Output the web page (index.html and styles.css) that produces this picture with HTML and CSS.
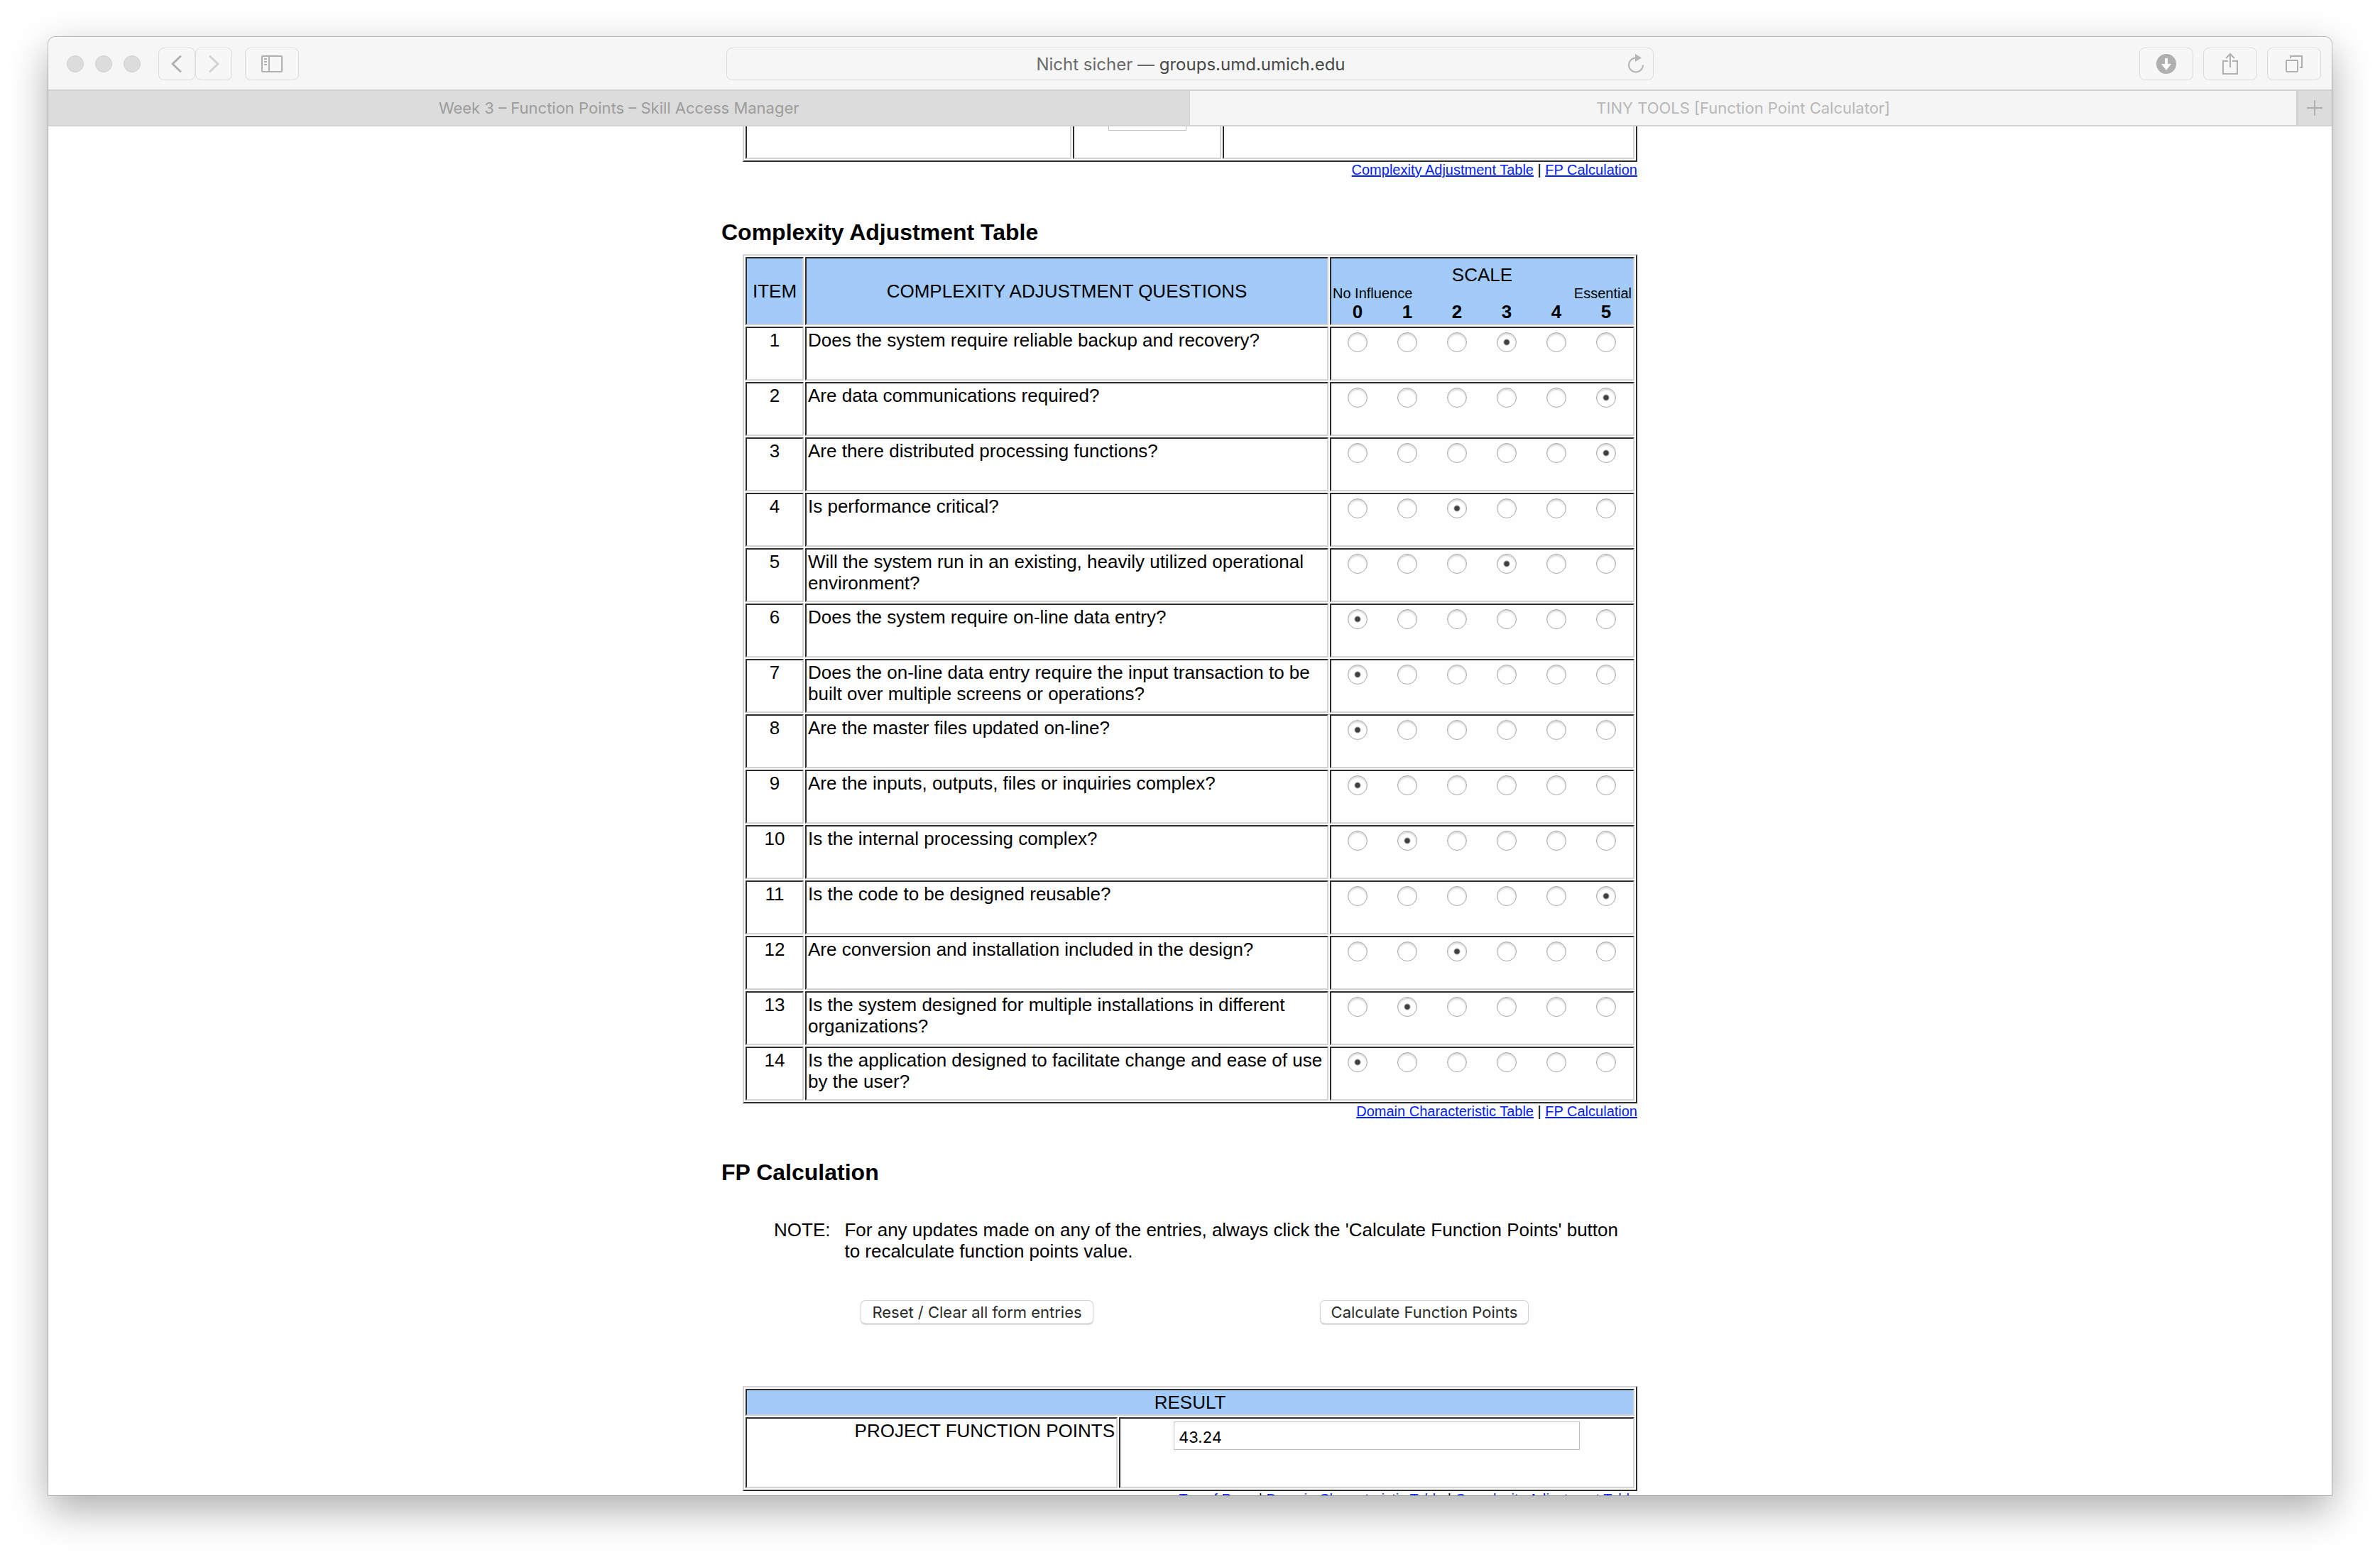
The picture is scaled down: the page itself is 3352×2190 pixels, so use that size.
FILE: index.html
```html
<!DOCTYPE html>
<html lang="en">
<head>
<meta charset="utf-8">
<title>TINY TOOLS [Function Point Calculator]</title>
<link rel="stylesheet" href="styles.css">
</head>
<body>
<div class="window">
  <header class="toolbar">
    <div class="tools tools-left">
      <div class="lights"><span class="light"></span><span class="light"></span><span class="light"></span></div>
      <div class="history">
        <button class="tool tool-nav" type="button" aria-label="Back"><svg width="20" height="28" viewBox="0 0 20 28"><path d="M15 3.500 4 14l11 10.500" fill="none" stroke="#b0b0b0" stroke-width="3" stroke-linecap="round" stroke-linejoin="round"/></svg></button>
        <button class="tool tool-nav" type="button" aria-label="Forward"><svg width="20" height="28" viewBox="0 0 20 28"><path d="M5 3.500 16 14 5 24.500" fill="none" stroke="#d2d2d2" stroke-width="3" stroke-linecap="round" stroke-linejoin="round"/></svg></button>
      </div>
      <button class="tool" type="button" aria-label="Sidebar"><svg width="30" height="24" viewBox="0 0 30 24" fill="none" stroke="#b0b0b0" stroke-width="2"><rect x="1" y="1" width="28" height="22" rx="1"/><path d="M11 1v22M4 5h4M4 9h4M4 13h4"/></svg></button>
    </div>
    <div class="address">
      <p class="address-text">Nicht sicher — <span class="domain">groups.umd.umich.edu</span></p>
      <button class="reload" type="button" aria-label="Reload"><svg width="24" height="28" viewBox="0 0 24 28"><path d="M12 5.500a10 10 0 1 0 10 10" fill="none" stroke="#b5b5b5" stroke-width="2"/><path d="M11 0v11l9-5.500z" fill="#b5b5b5"/></svg></button>
    </div>
    <div class="tools tools-right">
      <button class="tool" type="button" aria-label="Downloads"><svg width="28" height="28" viewBox="0 0 28 28"><circle cx="14" cy="14" r="14" fill="#b0b0b0"/><path d="M12 6h4v8h5l-7 9-7-9h5z" fill="#fff"/></svg></button>
      <button class="tool" type="button" aria-label="Share"><svg width="24" height="32" viewBox="0 0 24 32" fill="none" stroke="#b0b0b0" stroke-width="2"><path d="M9 12H2v18h20V12h-7M12 21V3M6 8l6-6 6 6"/></svg></button>
      <button class="tool" type="button" aria-label="Tab overview"><svg width="24" height="24" viewBox="0 0 24 24" fill="none" stroke="#b0b0b0" stroke-width="2"><rect x="1" y="7" width="16" height="16" rx="1"/><path d="M7 4V1h16v16h-3"/></svg></button>
    </div>
  </header>
  <nav class="tabs">
    <a class="tab" href="#week3">Week 3 – Function Points – Skill Access Manager</a>
    <a class="tab tab-active" href="#calculator">TINY TOOLS [Function Point Calculator]</a>
    <button class="new-tab" type="button" aria-label="New tab"><svg width="22" height="22" viewBox="0 0 22 22"><path d="M11 0v22M0 11h22" stroke="#b0b0b0" stroke-width="2"/></svg></button>
  </nav>
  <main class="view">
    <form class="page" id="calculator">
      <section class="block block-domain" id="domain">
        <table class="grid">
          <colgroup><col class="col-measure"><col class="col-count"><col></colgroup>
          <tbody><tr class="row-count"><td></td><td class="center"><input class="field field-count" type="text" aria-label="Count"></td><td></td></tr></tbody>
        </table>
        <p class="jump"><a href="#complexity">Complexity Adjustment Table</a> | <a href="#fp">FP Calculation</a></p>
      </section>

      <section class="block" id="complexity">
        <h2 class="title">Complexity Adjustment Table</h2>
        <table class="grid">
          <colgroup><col class="col-item"><col><col class="col-scale"></colgroup>
          <thead>
            <tr class="row-head">
              <th scope="col">ITEM</th>
              <th scope="col">COMPLEXITY ADJUSTMENT QUESTIONS</th>
              <th scope="col" class="scale-head">
                <div>SCALE</div>
                <div class="ends"><span>No Influence</span><span>Essential</span></div>
                <div class="scale scale-numbers"><b>0</b><b>1</b><b>2</b><b>3</b><b>4</b><b>5</b></div>
              </th>
            </tr>
          </thead>
          <tbody id="questions"></tbody>
        </table>
        <p class="jump"><a href="#domain">Domain Characteristic Table</a> | <a href="#fp">FP Calculation</a></p>
      </section>

      <section class="block" id="fp">
        <h2 class="title">FP Calculation</h2>
        <div class="note">
          <span>NOTE:</span>
          <p class="note-text">For any updates made on any of the entries, always click the 'Calculate Function Points' button to recalculate function points value.</p>
        </div>
        <div class="actions">
          <div class="action"><button class="push" type="button">Reset / Clear all form entries</button></div>
          <div class="action"><button class="push" type="button">Calculate Function Points</button></div>
        </div>
        <table class="grid">
          <colgroup><col class="col-result"><col></colgroup>
          <thead><tr><th colspan="2">RESULT</th></tr></thead>
          <tbody>
            <tr class="row-result">
              <td class="right"><label for="points">PROJECT FUNCTION POINTS</label></td>
              <td class="center"><input class="field field-points" id="points" type="text" value="43.24"></td>
            </tr>
          </tbody>
        </table>
        <p class="jump"><a href="#calculator">Top of Page</a> | <a href="#domain">Domain Characteristic Table</a> | <a href="#complexity">Complexity Adjustment Table</a></p>
      </section>
    </form>
  </main>
</div>
<script src="questions.js"></script>
</body>
</html>
```

FILE: styles.css
```css
* { box-sizing: border-box; }

body {
  margin: 0;
  height: 100vh;
  padding: 52px 68px 84px;
  background: #fff;
  overflow: hidden;
  font: 26px/30px "Liberation Sans", Arial, sans-serif;
  color: #000;
}

button { margin: 0; padding: 0; font: inherit; }
p, h2 { margin: 0; }

/* Window frame */
.window {
  display: flex;
  flex-direction: column;
  height: 100%;
  border-radius: 10px 10px 0 0;
  background: #fefefe;
  box-shadow: 0 0 0 1px rgba(0, 0, 0, .22), 0 20px 56px rgba(0, 0, 0, .33);
}

.toolbar {
  flex: none;
  display: grid;
  grid-template-columns: 1fr minmax(0, 1306px) 1fr;
  align-items: center;
  height: 76px;
  padding-top: 2px;
  border-bottom: 2px solid #d2d2d2;
  border-radius: 10px 10px 0 0;
  background: #f6f6f6;
}

.tools { display: flex; align-items: center; }
.tools-left { padding-left: 26px; }
.tools-right { justify-content: flex-end; gap: 14px; padding-right: 15px; }
.lights { display: flex; gap: 16px; margin-right: 25px; }
.light { width: 24px; height: 24px; border: 1px solid #d0d0d0; border-radius: 50%; background: #dcdcdc; }
.history { display: flex; margin-right: 18px; }

.tool {
  display: flex;
  align-items: center;
  justify-content: center;
  width: 76px;
  height: 46px;
  border: 1px solid #dcdcdc;
  border-radius: 8px;
  background: #f7f7f7;
}
.tool-nav { width: 52px; }

.address {
  display: flex;
  align-items: center;
  height: 46px;
  padding: 0 12px 0 38px;
  border: 1px solid #dcdcdc;
  border-radius: 8px;
}
.address-text {
  flex: 1;
  padding-top: 2px;
  text-align: center;
  font-family: Inter, sans-serif;
  font-size: 24px;
  color: #6a6a6a;
}
.domain { color: #484848; }
.reload { display: flex; border: 0; background: none; }

.tabs {
  flex: none;
  display: flex;
  height: 50px;
  border-bottom: 2px solid #d2d2d2;
  font: 22px/30px Inter, sans-serif;
}
.tab {
  flex: 1608;
  display: flex;
  align-items: center;
  justify-content: center;
  background: #dcdcdc;
  color: #9c9c9c;
  text-decoration: none;
}
.tab-active { flex: 1558; border: solid #d0d0d0; border-width: 0 2px 0 1px; background: #f5f5f5; color: #b8b8b8; }
.new-tab {
  display: flex;
  align-items: center;
  justify-content: center;
  width: 48px;
  border: 0;
  background: #dcdcdc;
}

/* Scrolled page */
.view { flex: 1; min-height: 0; overflow: hidden; }
.page { max-width: 1324px; margin: 0 auto; }
.block { padding: 0 32px; margin-bottom: 56px; }
.block-domain { margin: -44px 0 58px; }
.title { margin: 0 -30px 13px; font-size: 32px; line-height: 36px; }

.grid {
  width: 100%;
  table-layout: fixed;
  border: 2px solid;
  border-color: #d3d3d3 #2c2c2c #2c2c2c #d3d3d3;
  border-spacing: 2px;
}
.grid th, .grid td {
  padding: 2px;
  border: 2px solid;
  border-color: #2c2c2c #d3d3d3 #d3d3d3 #2c2c2c;
  vertical-align: top;
  text-align: left;
}
.grid th { background: #a2cbfa; font-weight: normal; text-align: center; vertical-align: middle; }
.grid .center { text-align: center; }
.grid .right { text-align: right; }
.grid .scale-head { vertical-align: bottom; }

.col-measure { width: 459px; }
.col-count { width: 209px; }
.col-item { width: 82px; }
.col-scale { width: 429px; }
.col-result { width: 524px; }
.row-count { height: 86px; }
.row-head { height: 96px; }
.row-question { height: 76px; }
.row-result { height: 100px; }

.ends { display: flex; justify-content: space-between; font-size: 20px; line-height: 22px; }
.scale { display: grid; grid-template-columns: repeat(6, 70px); justify-items: center; }

.radio {
  appearance: none;
  width: 28px;
  height: 28px;
  margin: 4px 0;
  border: 1px solid #a8a8a8;
  border-radius: 50%;
  background: #fff;
  box-shadow: inset 0 2px 3px rgba(0, 0, 0, .18);
}
.radio:checked { background: radial-gradient(circle, #404040 3px, #fff 5px); }

.field {
  height: 40px;
  margin: 2px 0;
  padding: 4px 6px 0;
  border: 1px solid #bebebe;
  background: #fff;
  font: 22px/30px Inter, sans-serif;
  color: #000;
  vertical-align: top;
}
.field-count { width: 110px; }
.field-points { width: 572px; }

.jump { text-align: right; font-size: 20px; line-height: 23px; }
.jump a { color: #0020f5; }

.note { display: flex; gap: 20px; margin-top: 48px; padding: 0 12px 0 44px; }
.note-text { flex: 1; }

.actions { display: grid; grid-template-columns: 1fr 1fr; margin: 54px -15px 87px 15px; }
.action { display: flex; justify-content: center; }
.push {
  height: 34px;
  padding: 0 15px;
  border: 1px solid #d2d2d2;
  border-bottom-color: #bcbcbc;
  border-radius: 7px;
  background: #fff;
  box-shadow: 0 1px 1px rgba(0, 0, 0, .12);
  font: 22px/30px Inter, sans-serif;
  color: #2a2a2a;
}
```

FILE: questions.js
```js
const questions = [
  ["Does the system require reliable backup and recovery?", 3],
  ["Are data communications required?", 5],
  ["Are there distributed processing functions?", 5],
  ["Is performance critical?", 2],
  ["Will the system run in an existing, heavily utilized operational environment?", 3],
  ["Does the system require on-line data entry?", 0],
  ["Does the on-line data entry require the input transaction to be built over multiple screens or operations?", 0],
  ["Are the master files updated on-line?", 0],
  ["Are the inputs, outputs, files or inquiries complex?", 0],
  ["Is the internal processing complex?", 1],
  ["Is the code to be designed reusable?", 5],
  ["Are conversion and installation included in the design?", 2],
  ["Is the system designed for multiple installations in different organizations?", 1],
  ["Is the application designed to facilitate change and ease of use by the user?", 0]
];

document.getElementById("questions").innerHTML = questions.map(([text, answer], i) => {
  const radios = [0, 1, 2, 3, 4, 5].map(n =>
    `<input class="radio" type="radio" name="q${i + 1}" value="${n}" aria-label="${n}"${n === answer ? " checked" : ""}>`
  ).join("");
  return `<tr class="row-question"><td class="center">${i + 1}</td><td id="q${i + 1}">${text}</td>` +
    `<td><div class="scale" role="radiogroup" aria-labelledby="q${i + 1}">${radios}</div></td></tr>`;
}).join("");
```
